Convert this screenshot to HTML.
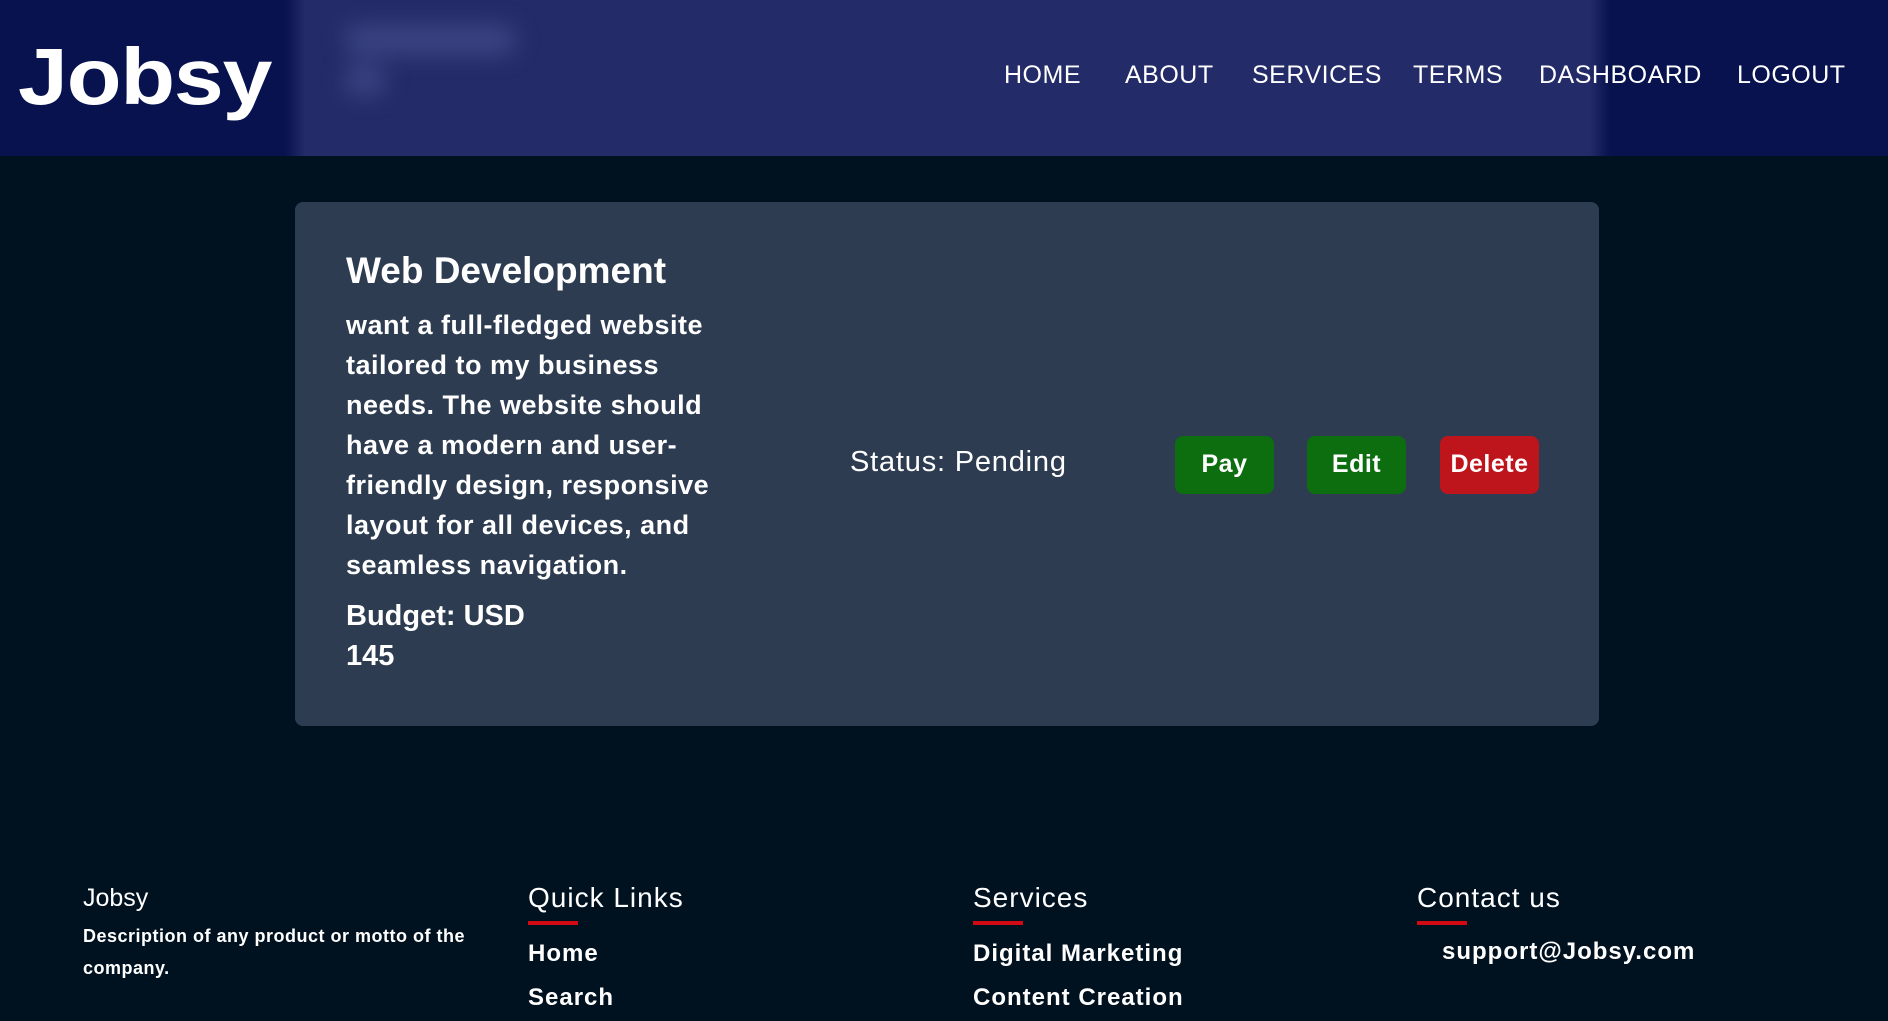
<!DOCTYPE html>
<html><head><style>
*{margin:0;padding:0;box-sizing:border-box}
body{width:1888px;height:1021px;overflow:hidden;background:#00111f;font-family:"Liberation Sans",sans-serif;color:#fff;position:relative}
.hdr{position:absolute;left:0;top:0;width:1888px;height:156px;background:linear-gradient(90deg,#08124f 0,#08124f 285px,#232b68 305px,#232b68 1590px,#08124f 1610px)}
.logo{position:absolute;left:18px;top:37px;font-size:80px;line-height:1;font-weight:900;letter-spacing:-1px;font-family:"Liberation Sans",sans-serif;transform:scaleX(1.12);transform-origin:left}
.blur{position:absolute;background:rgba(120,130,200,.3);filter:blur(12px);border-radius:10px}
.nav{position:absolute;top:61px;font-size:25px;white-space:nowrap;letter-spacing:.5px}
.a{position:absolute;white-space:nowrap}
.card{position:absolute;left:295px;top:202px;width:1304px;height:524px;background:#2d3c50;border-radius:8px}
.btn{position:absolute;top:436px;height:58px;width:99px;border-radius:8px;background:#0d6e10;font-size:25px;font-weight:bold;text-align:center;line-height:56px;letter-spacing:.5px}
.body{position:absolute;left:346px;top:305px;font-size:27px;line-height:40px;font-weight:bold;letter-spacing:.5px}
.bar{position:absolute;top:921px;width:50px;height:4px;background:#d10a14}
.fh{font-size:28px;top:882px;letter-spacing:1px}
.fl{font-size:24px;font-weight:bold;letter-spacing:1px}
</style></head><body>
<div class="hdr">
<div class="blur" style="left:345px;top:25px;width:170px;height:30px"></div>
<div class="blur" style="left:345px;top:65px;width:40px;height:30px"></div>
<div class="logo">Jobsy</div>
<div class="nav" style="left:1004px">HOME</div>
<div class="nav" style="left:1125px">ABOUT</div>
<div class="nav" style="left:1252px">SERVICES</div>
<div class="nav" style="left:1413px">TERMS</div>
<div class="nav" style="left:1539px">DASHBOARD</div>
<div class="nav" style="left:1737px">LOGOUT</div>
</div>
<div class="card"></div>
<div class="a" style="left:346px;top:250px;font-size:37px;font-weight:bold">Web Development</div>
<div class="body">want a full-fledged website<br>tailored to my business<br>needs. The website should<br>have a modern and user-<br>friendly design, responsive<br>layout for all devices, and<br>seamless navigation.</div>
<div class="a" style="left:346px;top:596px;font-size:29px;font-weight:bold;line-height:40px">Budget: USD<br>145</div>
<div class="a" style="left:850px;top:446px;font-size:29px;letter-spacing:.8px">Status: Pending</div>
<div class="btn" style="left:1175px">Pay</div>
<div class="btn" style="left:1307px">Edit</div>
<div class="btn" style="left:1440px;background:#be151c">Delete</div>

<div class="a" style="left:83px;top:884px;font-size:25px">Jobsy</div>
<div class="a" style="left:83px;top:920px;font-size:18px;line-height:32px;font-weight:bold;letter-spacing:.5px">Description of any product or motto of the<br>company.</div>
<div class="a fh" style="left:528px">Quick Links</div>
<div class="bar" style="left:528px"></div>
<div class="a fl" style="left:528px;top:940px">Home</div>
<div class="a fl" style="left:528px;top:984px">Search</div>
<div class="a fh" style="left:973px">Services</div>
<div class="bar" style="left:973px"></div>
<div class="a fl" style="left:973px;top:940px">Digital Marketing</div>
<div class="a fl" style="left:973px;top:984px">Content Creation</div>
<div class="a fh" style="left:1417px">Contact us</div>
<div class="bar" style="left:1417px"></div>
<div class="a fl" style="left:1442px;top:938px">support@Jobsy.com</div>
</body></html>
